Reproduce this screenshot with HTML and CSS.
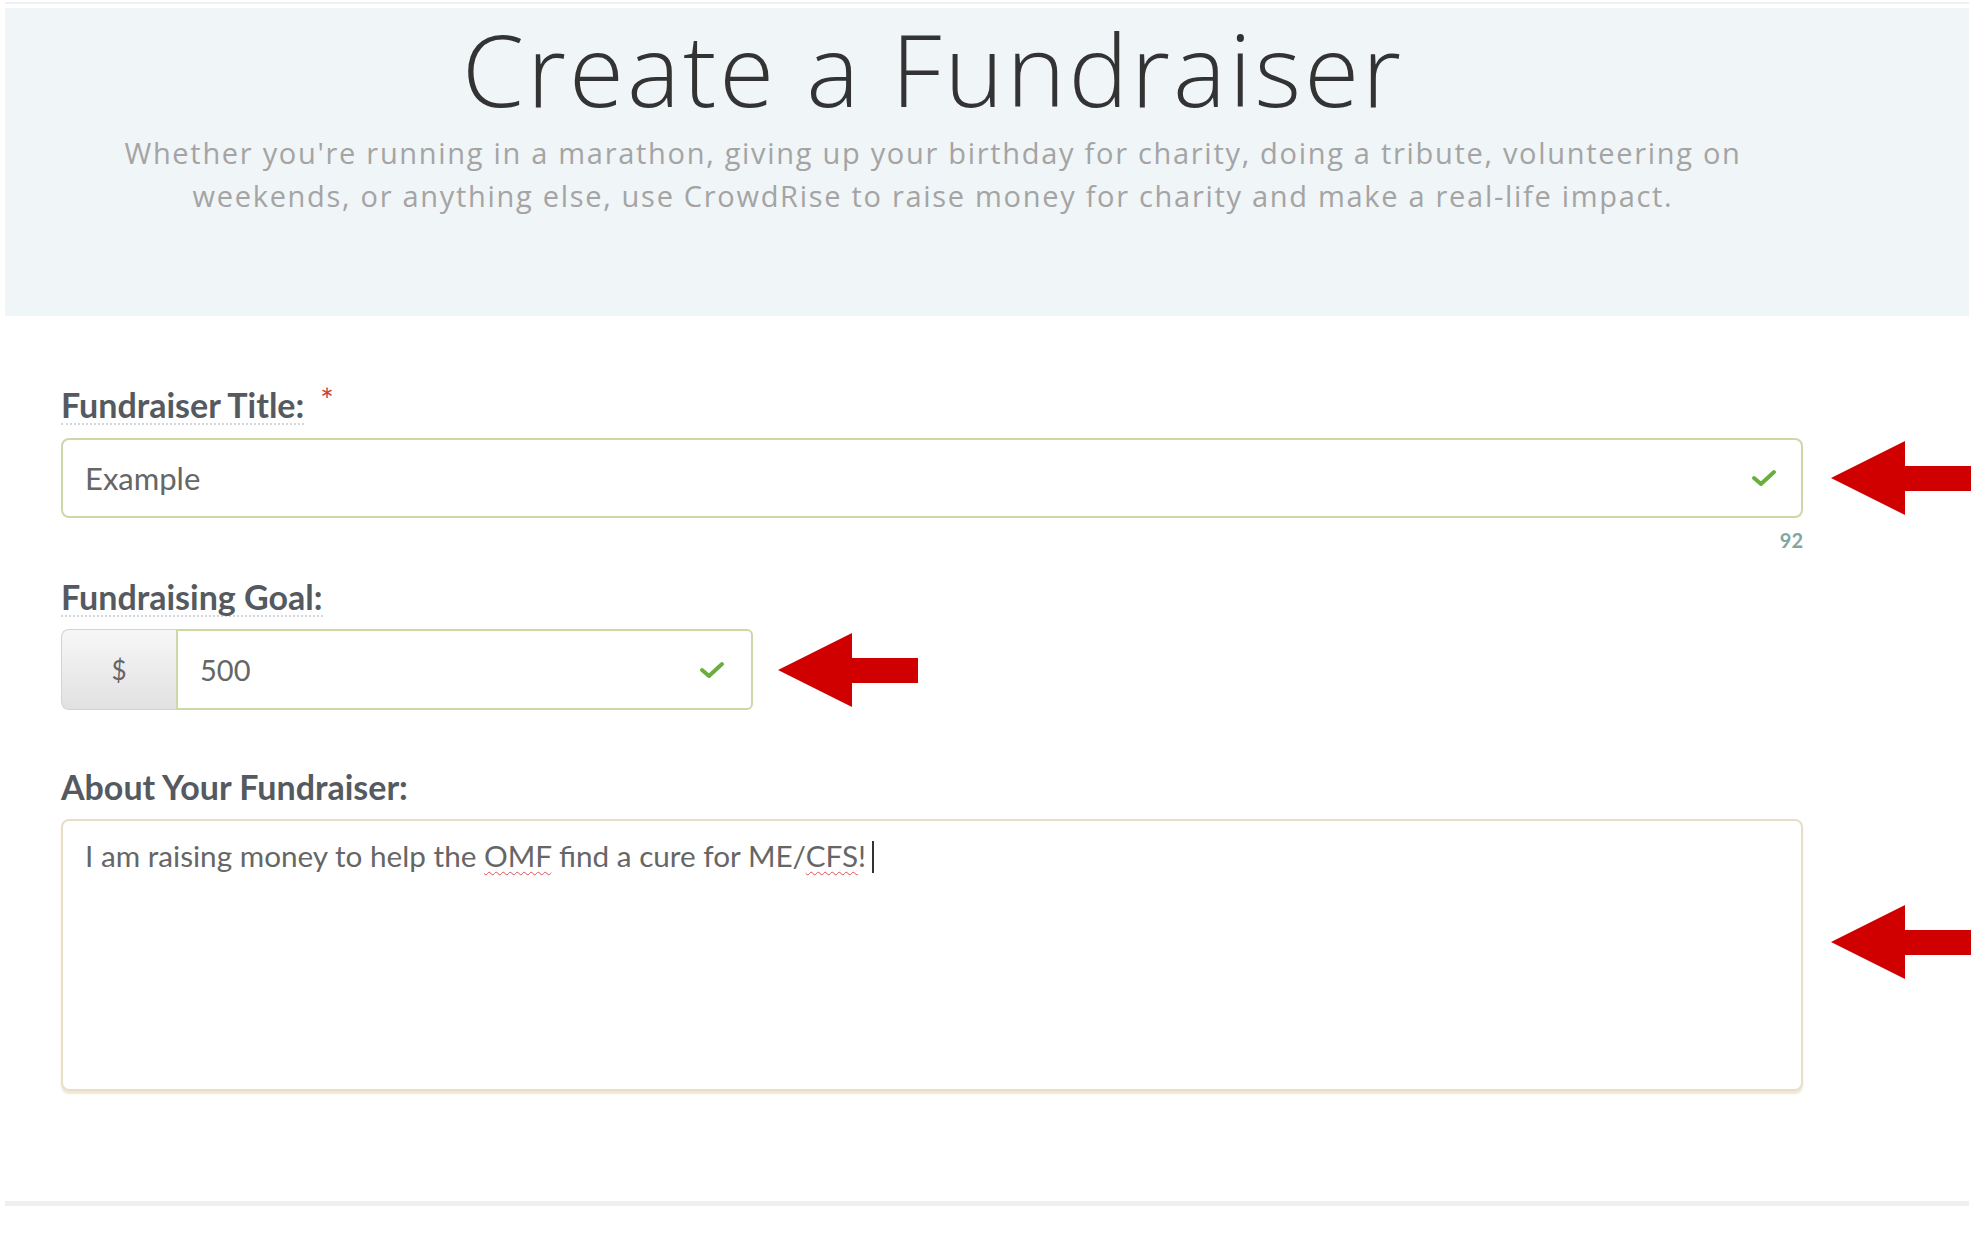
FILE: index.html
```html
<!DOCTYPE html>
<html lang="en">

<head>
  <meta charset="UTF-8" />
  <meta name="viewport" content="width=device-width, initial-scale=1" />
  <title>Create a Fundraiser</title>
  <link rel="stylesheet" href="styles.css">
</head>

<body>
  <div class="top-line"></div>

  <header class="hero">
    <h1>Create a Fundraiser</h1>
    <p class="intro">
      Whether you're running in a marathon, giving up your birthday for charity, doing a tribute, volunteering on<br>
      weekends, or anything else, use CrowdRise to raise money for charity and make a real-life impact.
    </p>
  </header>

  <main class="form">
    <div class="field field-title">
      <div class="label-row">
        <span class="field-label">Fundraiser Title:</span>
        <span class="required">*</span>
      </div>
      <div class="control-row">
        <div class="input valid">
          <span class="value">Example</span>
          <svg class="check" viewBox="0 0 26 20" width="26" height="20">
            <path d="M3 10 L10 16 L23 4" fill="none" stroke="#6aae3e" stroke-width="4" stroke-linecap="round" stroke-linejoin="round" />
          </svg>
        </div>
        <svg class="arrow" viewBox="0 0 140 74" width="140" height="74">
          <polygon points="0,37 74,0 74,25 140,25 140,50 74,50 74,74" fill="#d10000" />
        </svg>
      </div>
      <div class="count">92</div>
    </div>

    <div class="field field-goal">
      <div class="label-row">
        <span class="field-label">Fundraising Goal:</span>
      </div>
      <div class="control-row">
        <div class="input-group">
          <span class="addon">$</span>
          <div class="input valid goal">
            <span class="value">500</span>
            <svg class="check" viewBox="0 0 26 20" width="26" height="20">
              <path d="M3 10 L10 16 L23 4" fill="none" stroke="#6aae3e" stroke-width="4" stroke-linecap="round" stroke-linejoin="round" />
            </svg>
          </div>
        </div>
        <svg class="arrow" viewBox="0 0 140 74" width="140" height="74">
          <polygon points="0,37 74,0 74,25 140,25 140,50 74,50 74,74" fill="#d10000" />
        </svg>
      </div>
    </div>

    <div class="field field-about">
      <div class="label-row">
        <span class="field-label plain">About Your Fundraiser:</span>
      </div>
      <div class="control-row">
        <div class="textarea">
          I am raising money to help the <span class="typo">OMF</span> find a cure for ME/<span class="typo">CFS</span>!<span class="caret"></span>
        </div>
        <svg class="arrow arrow-about" viewBox="0 0 140 74" width="140" height="74">
          <polygon points="0,37 74,0 74,25 140,25 140,50 74,50 74,74" fill="#d10000" />
        </svg>
      </div>
    </div>
  </main>

  <div class="bottom-line"></div>
</body>

</html>
```

FILE: styles.css
```css
body {
  margin: 0;
  background-color: #fff;
  font-family: Lato, "Open Sans", sans-serif;
  color: #555;
}

.top-line {
  height: 2px;
  margin: 2px 15px 0 5px;
  background-color: #eef1f3;
}

.hero {
  height: 308px;
  margin: 4px 15px 0 5px;
  padding-right: 108px;
  background-color: #f0f5f7;
  text-align: center;
  box-sizing: border-box;
}

.hero h1 {
  margin: 0;
  font-family: "Open Sans", sans-serif;
  font-weight: 300;
  font-size: 100px;
  line-height: 120px;
  letter-spacing: 3px;
  color: #333;
}

.intro {
  margin: 3px 0 0;
  font-family: "Open Sans", sans-serif;
  font-size: 29px;
  line-height: 43px;
  letter-spacing: 1.7px;
  color: #a4a4a4;
}

.form {
  padding: 70px 0 0 61px;
}

.label-row {
  display: flex;
  align-items: flex-start;
}

.field-label {
  font-weight: 700;
  font-size: 34px;
  line-height: 37px;
  color: #545a60;
  border-bottom: 2px dotted #d3d6da;
}

.field-label.plain {
  border-bottom-color: transparent;
}

.required {
  margin: 2px 0 0 16px;
  font-size: 32px;
  line-height: 24px;
  color: #d03a3a;
}

.control-row {
  display: flex;
  align-items: center;
  gap: 28px;
  margin-top: 13px;
}

.input {
  width: 1742px;
  height: 80px;
  box-sizing: border-box;
  padding: 0 24px 0 22px;
  display: flex;
  align-items: center;
  justify-content: space-between;
  border: 2px solid #cbd9a9;
  border-radius: 8px;
  background-color: #fff;
  font-size: 31px;
  color: #666;
}

.count {
  width: 1742px;
  margin-top: 10px;
  text-align: right;
  font-size: 20px;
  font-weight: 700;
  line-height: 24px;
  color: #80a6a2;
}

.field-goal {
  margin-top: 26px;
}

.field-goal .control-row {
  gap: 25px;
  margin-top: 12px;
}

.input-group {
  display: flex;
  height: 81px;
}

.addon {
  width: 115px;
  display: flex;
  align-items: center;
  justify-content: center;
  box-sizing: border-box;
  border: 1px solid #d3d3d3;
  border-right: none;
  border-radius: 8px 0 0 8px;
  background: linear-gradient(#f7f7f7, #e1e1e1);
  font-size: 26px;
  color: #666;
}

.input.goal {
  width: 577px;
  height: 81px;
  padding-right: 26px;
  border-radius: 0 6px 6px 0;
  font-size: 29px;
}

.field-about {
  margin-top: 58px;
}

.field-about .control-row {
  margin-top: 12px;
}

.textarea {
  width: 1742px;
  height: 272px;
  box-sizing: border-box;
  padding: 17px 22px;
  border: 2px solid #e8dec7;
  border-radius: 8px;
  box-shadow: 0 3px 2px #f1e7d6;
  font-size: 29.7px;
  line-height: 36px;
  color: #666;
}

.typo {
  text-decoration: underline wavy #d9535b;
  text-decoration-thickness: 1px;
  text-underline-offset: 4px;
}

.caret {
  display: inline-block;
  width: 2px;
  height: 32px;
  margin-left: 6px;
  vertical-align: -6px;
  background-color: #333;
}

.arrow-about {
  margin-bottom: 26px;
}

.bottom-line {
  height: 5px;
  margin: 110px 15px 0 5px;
  background-color: #efefef;
}
```
